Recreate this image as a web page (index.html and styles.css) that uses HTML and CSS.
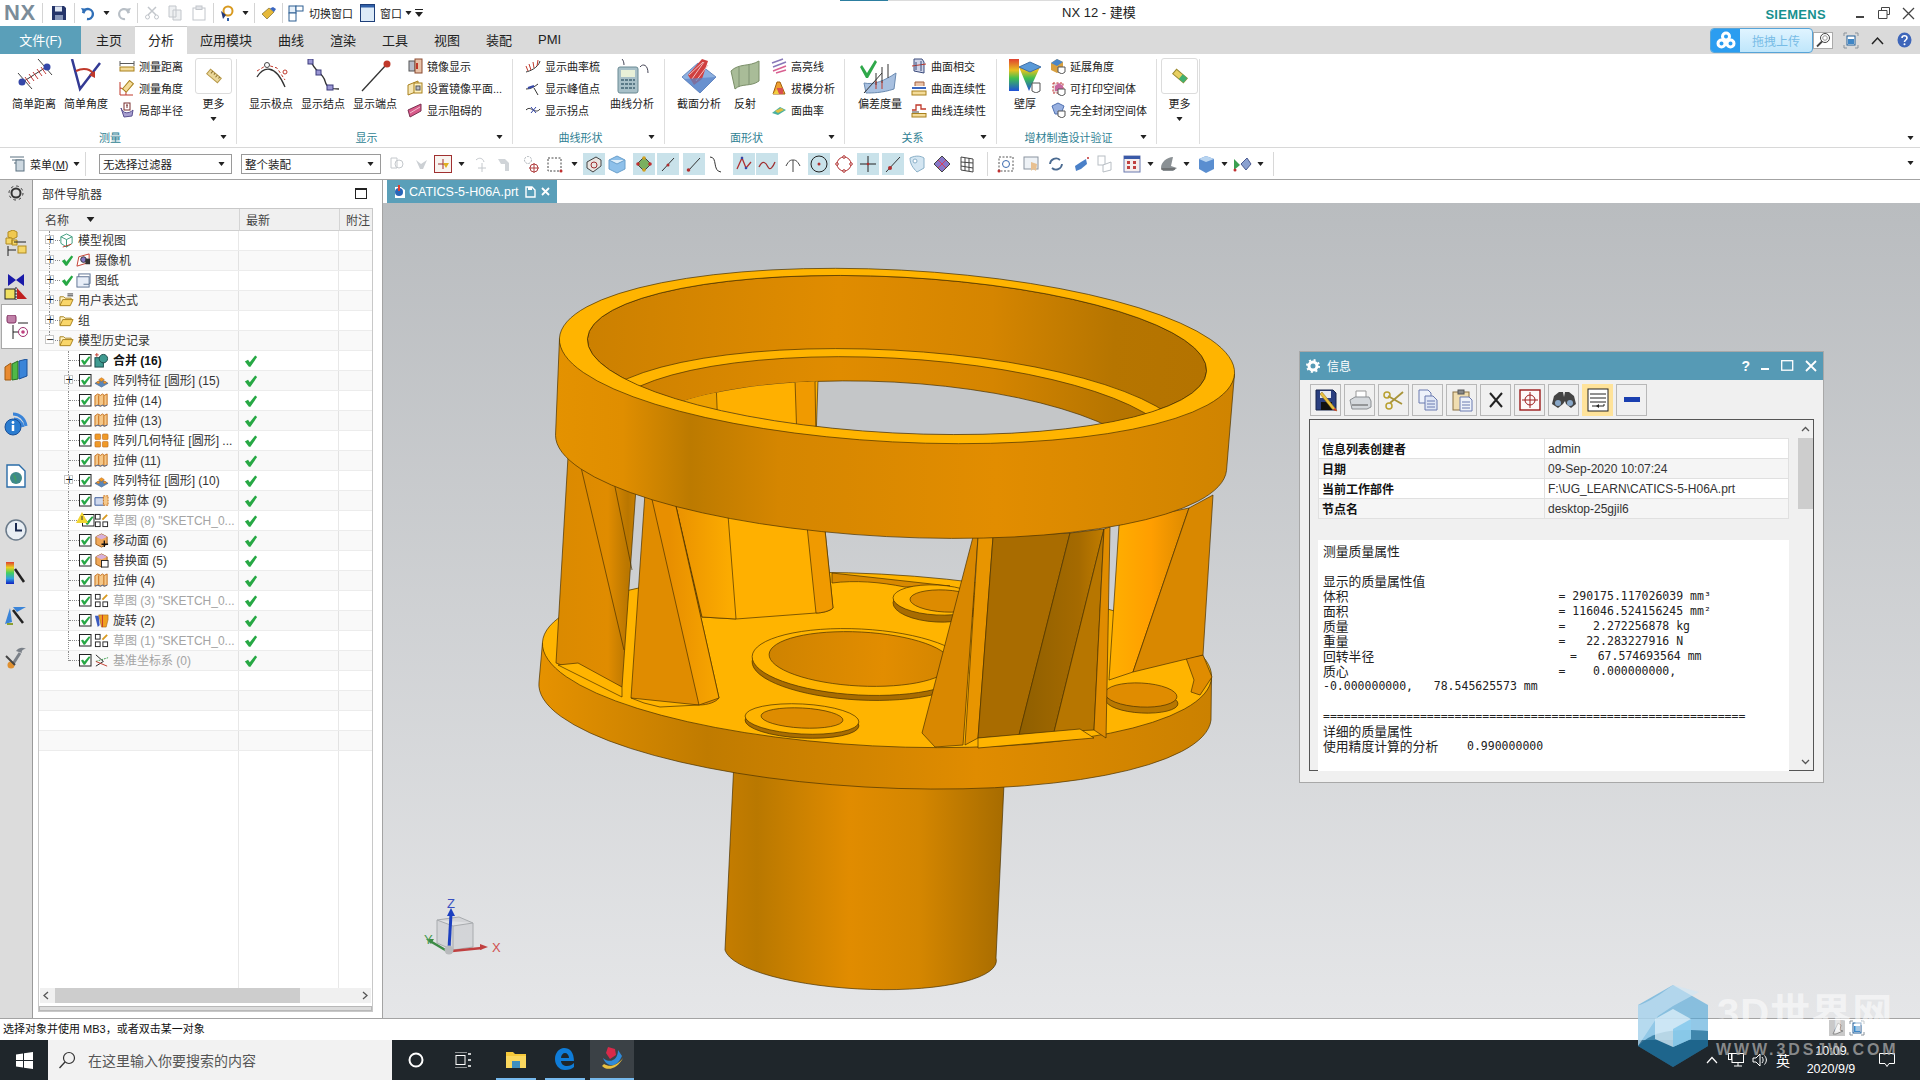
FILE: index.html
```
<!DOCTYPE html>
<html lang="zh-CN">
<head>
<meta charset="utf-8">
<title>NX 12 - 建模</title>
<link rel="stylesheet" href="styles.css">
</head>
<body>
<svg class="defs" aria-hidden="true">
  <symbol id="ok" viewBox="0 0 16 16"><path d="M1 8.5 4.6 6.6 6.6 9.4 12.8 1.8 15 3.4 7.4 14.6H5.6z" fill="#27a844"/></symbol>
  <symbol id="cb" viewBox="0 0 13 13"><rect x=".5" y=".5" width="11.5" height="11.5" fill="#fff" stroke="#222"/><path d="M2 6.6 4 5.4 5.4 7.4 10 2.2 11.4 3.2 6 10.8H4.6z" fill="#27a844"/></symbol>
  <symbol id="ext" viewBox="0 0 16 16"><path d="M1 14V3l3-2 3 1.5 2-1.5 2 1.5 3-1.5v12l-3 1-2-1-2 1-3-1-3 1z" fill="#f5c88a" stroke="#c46d17"/><path d="M5 2.5V14M10.5 2.5V14" stroke="#c46d17"/><path d="M1 14l3-1 3 1 2-1 2 1 3-1" stroke="#4a6fa5" fill="none"/></symbol>
  <symbol id="pat" viewBox="0 0 16 16"><path d="M1 11 8 7l7 4-7 4z" fill="#5a86b8" stroke="#345a88" stroke-width=".6"/><path d="M5 7l3-2 3 2-3 2zM2.500 10l2-1.400 2 1.400-2 1.400zM9.500 10l2-1.400 2 1.400-2 1.400z" fill="#f09a28" stroke="#b8641a" stroke-width=".5"/></symbol>
  <symbol id="skt" viewBox="0 0 16 16"><rect x="1.500" y="1.500" width="5" height="5" fill="#fff" stroke="#222"/><rect x="1.500" y="9.500" width="5" height="5" fill="#fff" stroke="#222"/><rect x="9.500" y="9.500" width="5" height="5" fill="#fff" stroke="#222"/><path d="M9 7 14 2" stroke="#d89a20" stroke-width="2"/></symbol>
  <symbol id="fld" viewBox="0 0 16 16"><path d="M1 13V4h4l1.500 1.500H13V7" fill="#fff3c4" stroke="#a8801c"/><path d="M1 13.500 4 7h11l-3 6.500z" fill="#f9d66a" stroke="#a8801c"/></symbol>
  <symbol id="more" viewBox="0 0 20 20"><g transform="rotate(40 10 10)"><rect x="3" y="7" width="14" height="6" fill="#ead79a" stroke="#b89a4a"/><path d="M6 7v3M9 7v2M12 7v3M15 7v2" stroke="#8a7030"/></g></symbol>
  <symbol id="tick" viewBox="0 0 8 5"><path d="M0 0h8L4 5z" fill="#222"/></symbol>
</svg>

<header class="titlebar">
  <div class="qat">
    <span class="nx">NX</span><i class="vs"></i>
    <span class="q"><svg width="16" height="16" viewBox="0 0 16 16"><path d="M1 1h12l2 2v12H1z" fill="#25356a"/><rect x="4" y="1.500" width="7" height="5" fill="#dfe6f2"/><rect x="4" y="10" width="8" height="5" fill="#8595b8"/></svg></span><i class="vs"></i>
    <span class="q"><svg width="16" height="16" viewBox="0 0 16 16"><path d="M3 8a5 5 0 1 1 4 6" fill="none" stroke="#2f6fb8" stroke-width="2.400"/><path d="M1 3l6 1-3 5z" fill="#2f6fb8"/></svg></span>
    <span class="q"><svg class="tk" viewBox="0 0 8 5"><use href="#tick"/></svg></span>
    <span class="q"><svg width="16" height="16" viewBox="0 0 16 16"><path d="M13 8a5 5 0 1 0-4 6" fill="none" stroke="#b8bfc6" stroke-width="2.200"/><path d="M15 3 9 4l3 5z" fill="#b8bfc6"/></svg></span><i class="vs"></i>
    <span class="q"><svg width="16" height="16" viewBox="0 0 16 16"><path d="M12 2 4 10M4 2l8 8" stroke="#c2c6cb" stroke-width="1.500"/><circle cx="3.500" cy="12" r="2" fill="none" stroke="#c2c6cb"/><circle cx="12.500" cy="12" r="2" fill="none" stroke="#c2c6cb"/></svg></span>
    <span class="q"><svg width="16" height="16" viewBox="0 0 16 16"><path d="M2 1h7v11H2zM6 5h8v10H6z" fill="#eef0f2" stroke="#c2c6cb"/></svg></span>
    <span class="q"><svg width="16" height="16" viewBox="0 0 16 16"><rect x="2" y="3" width="12" height="12" fill="none" stroke="#c2c6cb"/><rect x="5" y="1" width="6" height="3.500" fill="#e2e4e8" stroke="#c2c6cb"/></svg></span><i class="vs"></i>
    <span class="q"><svg width="17" height="17" viewBox="0 0 17 17"><circle cx="9" cy="6" r="4.500" fill="none" stroke="#d89a20" stroke-width="2"/><path d="M8 13h2v3H8z" fill="#2f5fa8"/><path d="M2 6l5 4-3 4z" fill="#233a7a"/></svg></span>
    <span class="q"><svg class="tk" viewBox="0 0 8 5"><use href="#tick"/></svg></span><span></span><i class="vs"></i>
    <span class="q"><svg width="17" height="15" viewBox="0 0 17 15"><path d="M2 8l7-6 5 4-7 7z" fill="#e6b93a" stroke="#6a5a20" stroke-width=".6"/><path d="M10 2.500 14 6l2-3-3-2z" fill="#3a66c0"/></svg></span><i class="vs"></i>
    <span class="q"><svg width="16" height="17" viewBox="0 0 16 17"><rect x="1" y="1" width="7" height="7" fill="#e6f0fa" stroke="#2c5e92"/><rect x="8" y="1" width="7" height="5" fill="#fff" stroke="#2c5e92"/><rect x="1" y="8" width="7" height="8" fill="#fff" stroke="#2c5e92"/></svg></span>
    <span class="qt">切换窗口</span>
    <span class="q"><svg width="15" height="18" viewBox="0 0 15 18"><rect x=".5" y=".5" width="14" height="17" fill="#dceaf7" stroke="#1e3f7a"/><rect x="1" y="1" width="13" height="2.500" fill="#2f5fa8"/></svg></span>
    <span class="qt qt-w">窗口</span>
    <span class="q"><svg class="tk" viewBox="0 0 8 5"><use href="#tick"/></svg></span>
    <span class="q"><svg width="8" height="8" viewBox="0 0 8 8"><path d="M0 0h8v1H0zM0 3h8L4 8z" fill="#222"/></svg></span>
  </div>
  <div class="doc-title">NX 12 - 建模</div>
  <div class="top-right">
    <span class="siemens">SIEMENS</span>
    <span class="wc"><svg width="10" height="10" viewBox="0 0 10 10"><rect x="1" y="8" width="8" height="2" fill="#444"/></svg></span>
    <span class="wc"><svg width="12" height="12" viewBox="0 0 12 12"><path d="M3.500 3V.5h8v7H9M.5 3.500h8.500v8H.5z" fill="none" stroke="#444"/></svg></span>
    <span class="wc"><svg width="13" height="13" viewBox="0 0 13 13"><path d="M1 1l11 11M12 1 1 12" stroke="#444" stroke-width="1.300"/></svg></span>
  </div>
</header>

<nav class="tabs">
  <span class="file">文件(F)</span>
  <span class="tab tb-a">主页</span>
  <span class="tab on">分析</span>
  <span class="tab tb-b">应用模块</span>
  <span class="tab tb-c">曲线</span>
  <span class="tab tb-c">渲染</span>
  <span class="tab tb-c">工具</span>
  <span class="tab tb-c">视图</span>
  <span class="tab tb-c">装配</span>
  <span class="tab tb-c">PMI</span>
  <div class="tab-right">
    <div class="upload">
      <span class="up-ic"><svg width="20" height="18" viewBox="0 0 20 18"><g fill="none" stroke="#fff" stroke-width="3"><circle cx="10" cy="5.500" r="3.500"/><circle cx="5.500" cy="12.500" r="3.500"/><circle cx="14.500" cy="12.500" r="3.500"/></g></svg></span>
      <span class="up-tx">拖拽上传</span>
    </div>
    <span class="find"><svg width="16" height="16" viewBox="0 0 16 16"><circle cx="10" cy="6" r="4.500" fill="#fff" stroke="#444"/><circle cx="10" cy="6" r="2.300" fill="none" stroke="#999"/><path d="M7 9.500 2 14.500" stroke="#444" stroke-width="1.800"/></svg></span>
    <span class="tr-i m1"><svg width="16" height="17" viewBox="0 0 16 17"><path d="M1 4V1h3M12 1h3v3M15 13v3h-3M4 16H1v-3" fill="none" stroke="#8a939b"/><rect x="4" y="4" width="8" height="9" fill="#fff" stroke="#1f5c96"/><rect x="5" y="7" width="6" height="5" fill="#3f86c6"/></svg></span>
    <span class="tr-i m2"><svg width="13" height="9" viewBox="0 0 13 9"><path d="M1 8 6.500 2 12 8" fill="none" stroke="#222" stroke-width="1.500"/></svg></span>
    <span class="tr-i m3"><svg width="15" height="16" viewBox="0 0 15 16"><ellipse cx="7.500" cy="8" rx="7" ry="7.500" fill="#3e66ba"/><path d="M5 6c0-3 5-3 5 0 0 2-2.500 2-2.500 4" fill="none" stroke="#fff" stroke-width="1.600"/><circle cx="7.500" cy="12.300" r="1" fill="#fff"/></svg></span>
  </div>
</nav>

<section class="ribbon">
  <div class="group g1">
    <div class="gitems">
      <div class="big"><span class="big-ic"><svg width="40" height="34" viewBox="0 0 40 34"><path d="M4 14l14 16M24 0l14 16" stroke="#444"/><path d="M7 24 34 7" stroke="#333"/><path d="M11 18l5 7M15 15l5 7M19 13l5 7M23 10l5 7M27 8l5 7" stroke="#c03a3a"/><circle cx="8" cy="23" r="3.500" fill="#3547a8"/><circle cx="33" cy="8" r="3.500" fill="#3547a8"/></svg></span><span>简单距离</span></div>
      <div class="big"><span class="big-ic"><svg width="36" height="34" viewBox="0 0 36 34"><path d="M4 0 12 30 32 4" fill="none" stroke="#333a94" stroke-width="2.500"/><path d="M8 12C16 8 23 10 26 16" fill="none" stroke="#c0392b" stroke-width="2"/><path d="M27 19l-6-3 6-4z" fill="#c0392b"/></svg></span><span>简单角度</span></div>
      <div class="smalls s1">
        <div class="sm"><svg viewBox="0 0 16 16"><path d="M1 3v5M15 3v5M1 5.500h14" stroke="#5a5a5a"/><rect x="1" y="9" width="14" height="4" fill="#f4dc9a" stroke="#a8801c"/></svg><span>测量距离</span></div>
        <div class="sm"><svg viewBox="0 0 16 16"><path d="M1 2V15H14" fill="none" stroke="#c0392b"/><path d="M1 8a6 6 0 0 1 6 7" fill="none" stroke="#c0392b"/><g transform="rotate(-50 9 7)"><rect x="4" y="4" width="11" height="5" fill="#f4dc9a" stroke="#a8801c"/></g></svg><span>测量角度</span></div>
        <div class="sm"><svg viewBox="0 0 16 16"><path d="M2 6c2 6 8 6 12 2l-1 6-8 1z" fill="#a8a0d0" stroke="#5a5090"/><rect x="5" y="1" width="6" height="7" fill="#fff" stroke="#7a3030"/><path d="M7 3h2M8 3v3" stroke="#7a3030"/></svg><span>局部半径</span></div>
      </div>
      <div class="more-col"><span class="more-box"><svg width="20" height="20"><use href="#more"/></svg></span><span>更多</span><svg class="tk" viewBox="0 0 8 5"><use href="#tick"/></svg></div>
    </div>
    <div class="glabel"><span>测量</span><svg class="tk" viewBox="0 0 8 5"><use href="#tick"/></svg></div>
  </div>

  <div class="group g2">
    <div class="gitems">
      <div class="big"><span class="big-ic"><svg width="40" height="34" viewBox="0 0 40 34"><path d="M6 18C12 8 24 4 34 28" fill="none" stroke="#333" stroke-width="1.300"/><path d="M6 12l10-6 10 3 8 12" fill="none" stroke="#c0392b" stroke-dasharray="3 2"/><circle cx="16" cy="6" r="2.500" fill="#fff" stroke="#444"/><circle cx="34" cy="13" r="2" fill="#fff" stroke="#c0392b"/></svg></span><span>显示极点</span></div>
      <div class="big"><span class="big-ic"><svg width="40" height="34" viewBox="0 0 40 34"><path d="M8 2c3 10 12 12 14 20s8 8 14 8" fill="none" stroke="#333" stroke-width="1.300"/><g fill="#9a96d4" stroke="#3a3a7a"><rect x="5" y="0" width="5" height="5"/><rect x="13" y="11" width="5" height="5"/><rect x="24" y="26" width="6" height="5"/></g></svg></span><span>显示结点</span></div>
      <div class="big"><span class="big-ic"><svg width="40" height="34" viewBox="0 0 40 34"><path d="M7 32 31 6" stroke="#333" stroke-width="1.300"/><circle cx="32" cy="5" r="3.500" fill="#c0392b"/></svg></span><span>显示端点</span></div>
      <div class="smalls s2">
        <div class="sm"><svg viewBox="0 0 16 16"><rect x="2" y="3" width="6" height="10" fill="#b8bcc8" stroke="#555"/><rect x="8" y="1" width="7" height="14" fill="#e8c2a8" stroke="#8a4a30"/><path d="M10 5v6" stroke="#c0392b" stroke-width="2"/></svg><span>镜像显示</span></div>
        <div class="sm"><svg viewBox="0 0 16 16"><path d="M1 5 11 1v10L1 15z" fill="#f6e7b6" stroke="#a8801c"/><rect x="7" y="3" width="8" height="10" fill="#fff2c0" stroke="#a8801c"/><rect x="9" y="6" width="4" height="4" fill="#b8bcc8" stroke="#555"/></svg><span>设置镜像平面...</span></div>
        <div class="sm"><svg viewBox="0 0 16 16"><path d="M1 8 14 2v7L3 15z" fill="#d85a8a" stroke="#7a3050"/><path d="M3 11 13 5" stroke="#f2c0d0"/></svg><span>显示阻碍的</span></div>
      </div>
    </div>
    <div class="glabel"><span>显示</span><svg class="tk" viewBox="0 0 8 5"><use href="#tick"/></svg></div>
  </div>

  <div class="group g3">
    <div class="gitems">
      <div class="smalls s3">
        <div class="sm"><svg viewBox="0 0 16 16"><path d="M1 14C5 13 13 10 15 3" fill="none" stroke="#333"/><path d="M3 13 1 8M6 12 4 6M9 10 8 4M12 8l1-6" stroke="#c0392b"/></svg><span>显示曲率梳</span></div>
        <div class="sm"><svg viewBox="0 0 16 16"><path d="M1 9C6 9 9 7 13 4" fill="none" stroke="#333"/><path d="M9 8l4 7" stroke="#333"/><path d="M3 8 9 6" stroke="#3547a8" stroke-width="2"/></svg><span>显示峰值点</span></div>
        <div class="sm"><svg viewBox="0 0 16 16"><path d="M1 8c3-3 5-1 7 0s5 2 7-1" fill="none" stroke="#333"/><path d="M6 5l5 6M11 5l-5 6" stroke="#3547a8"/></svg><span>显示拐点</span></div>
      </div>
      <div class="big"><span class="big-ic"><svg width="36" height="36" viewBox="0 0 36 36"><path d="M10 6C10 3 9 1 8 0M26 8c3-4 8-2 8 6" fill="none" stroke="#445"/><rect x="4" y="8" width="20" height="26" rx="2" fill="#a8c0c8" stroke="#6a8a94"/><rect x="7" y="11" width="14" height="7" fill="#e8f0d8"/><path d="M7 21h14M7 25h14M7 29h14" stroke="#5a7a88" stroke-dasharray="3 1" stroke-width="2"/></svg></span><span>曲线分析</span></div>
    </div>
    <div class="glabel"><span>曲线形状</span><svg class="tk" viewBox="0 0 8 5"><use href="#tick"/></svg></div>
  </div>

  <div class="group g4">
    <div class="gitems">
      <div class="big"><span class="big-ic"><svg width="38" height="36" viewBox="0 0 38 36"><path d="M2 18 18 4l18 14-16 16z" fill="#8cb0e0" stroke="#6a8ac0"/><path d="M8 16 22 0l6 2-6 18-8 6z" fill="#d04040"/><path d="M12 20 24 3M16 22 28 6M9 16l14-13" stroke="#f2c0c0"/><path d="M4 20l16 14 16-16" fill="#5a84c8" opacity=".7"/></svg></span><span>截面分析</span></div>
      <div class="big narrow"><span class="big-ic"><svg width="32" height="32" viewBox="0 0 32 32"><path d="M2 12C10 4 20 8 30 2v20c-8 6-18 2-24 8z" fill="#a9bc98" stroke="#7a8e68"/><path d="M10 8v20M20 6v20" stroke="#7e9272"/></svg></span><span>反射</span></div>
      <div class="smalls s4">
        <div class="sm"><svg viewBox="0 0 16 16"><g fill="none" stroke="#8878b8" stroke-width="1.500"><path d="M1 5 12 1"/><path d="M2 9 15 4"/></g><g fill="none" stroke="#d86090" stroke-width="1.500"><path d="M2 13 15 8"/><path d="M5 15l10-3"/></g></svg><span>高亮线</span></div>
        <div class="sm"><svg viewBox="0 0 16 16"><path d="M2 14 6 2h3l5 12z" fill="#f0a030" stroke="#a06010"/><path d="M6 8h6v6H6z" fill="#d85050"/><path d="M2 14l4-5 2 5z" fill="#f0d040"/></svg><span>拔模分析</span></div>
        <div class="sm"><svg viewBox="0 0 16 16"><path d="M1 11 9 5l6 3-8 5z" fill="#4ab0a0"/><path d="M4 9l6-3 3 2-6 3z" fill="#e0c040"/></svg><span>面曲率</span></div>
      </div>
    </div>
    <div class="glabel"><span>面形状</span><svg class="tk" viewBox="0 0 8 5"><use href="#tick"/></svg></div>
  </div>

  <div class="group g5">
    <div class="gitems">
      <div class="big"><span class="big-ic"><svg width="40" height="36" viewBox="0 0 40 36"><path d="M4 24C14 26 24 22 36 14l-2 16C22 34 12 34 6 34z" fill="#a8c0e0" stroke="#6a8ab0"/><path d="M4 34 22 14" stroke="#333"/><path d="M2 6l5 8 8-13 2 2-9 16H6L0 8z" fill="#2fa84a"/><path d="M16 14v12M22 8v16M28 5v14" stroke="#333"/><path d="M16 22v8M22 22v8" stroke="#c0392b"/></svg></span><span>偏差度量</span></div>
      <div class="smalls s5">
        <div class="sm"><svg viewBox="0 0 16 16"><path d="M3 1h8l2 3v11l-10-2z" fill="#cfd4e8" stroke="#3a4a7a"/><path d="M1 8 15 6" stroke="#c0392b"/><path d="M5 4v8M10 3v10" stroke="#3a4a7a"/></svg><span>曲面相交</span></div>
        <div class="sm"><svg viewBox="0 0 16 16"><path d="M4 6V2h9v4" fill="#e8c2a8" stroke="#a06040"/><rect x="1" y="7" width="14" height="2" fill="#3a66c0"/><rect x="1" y="11" width="14" height="4" fill="#f4dc9a" stroke="#a8801c"/></svg><span>曲面连续性</span></div>
        <div class="sm"><svg viewBox="0 0 16 16"><path d="M1 8h4V3h5v4h5" fill="none" stroke="#c0392b" stroke-width="1.300"/><path d="M1 10h7" stroke="#444"/><rect x="1" y="11.500" width="14" height="3.500" fill="#f4dc9a" stroke="#a8801c"/></svg><span>曲线连续性</span></div>
      </div>
    </div>
    <div class="glabel"><span>关系</span><svg class="tk" viewBox="0 0 8 5"><use href="#tick"/></svg></div>
  </div>

  <div class="group g6">
    <div class="gitems">
      <div class="big narrow"><span class="big-ic"><svg width="34" height="34" viewBox="0 0 34 34"><defs><linearGradient id="rb" x1="0" y1="0" x2="0" y2="1"><stop offset="0" stop-color="#e04030"/><stop offset=".35" stop-color="#e8c020"/><stop offset=".6" stop-color="#40c050"/><stop offset="1" stop-color="#2050d8"/></linearGradient></defs><path d="M1 0h10v32H1zM11 8 32 8 21 32z" fill="url(#rb)"/><path d="M11 8l11-5 11 5-11 5z" fill="#5a9ad8" stroke="#4070a8"/><path d="M24 24h8v8l-4 2-4-2z" fill="#fff" stroke="#555"/></svg></span><span>壁厚</span></div>
      <div class="smalls s6">
        <div class="sm"><svg viewBox="0 0 16 16"><path d="M1 5 7 1l6 3v8l-6 3-6-3z" fill="#d8a040"/><path d="M1 5l6 3 6-4-6-3z" fill="#4a86c8"/><path d="M8 9h7v5l-3 2-4-2z" fill="#fff" stroke="#555"/></svg><span>延展角度</span></div>
        <div class="sm"><svg viewBox="0 0 16 16"><path d="M3 3h10v10H3z" fill="#e8d8d8" stroke="#c03030" stroke-dasharray="2 1.500"/><path d="M5 6l4-3 4 3v5H5z" fill="#c868a0"/><path d="M8 9h7v5l-3 2-4-2z" fill="#fff" stroke="#555"/></svg><span>可打印空间体</span></div>
        <div class="sm"><svg viewBox="0 0 16 16"><path d="M2 4 8 1l6 3-3 8H5z" fill="#98b0e0" stroke="#5070b0"/><path d="M8 9h7v5l-3 2-4-2z" fill="#fff" stroke="#555"/></svg><span>完全封闭空间体</span></div>
      </div>
    </div>
    <div class="glabel"><span>增材制造设计验证</span><svg class="tk" viewBox="0 0 8 5"><use href="#tick"/></svg></div>
  </div>

  <div class="group g7">
    <div class="gitems">
      <div class="more-col"><span class="more-box"><svg width="20" height="20" viewBox="0 0 20 20"><g transform="rotate(40 10 10)"><rect x="3" y="7" width="14" height="6" fill="#e8d060" stroke="#9a8a30"/><rect x="11" y="7" width="6" height="6" fill="#40b070"/></g></svg></span><span>更多</span><svg class="tk" viewBox="0 0 8 5"><use href="#tick"/></svg></div>
    </div>
  </div>
  <svg class="tk rib-end" viewBox="0 0 8 5"><use href="#tick"/></svg>
</section>

<section class="selbar">
  <span class="menu-ic"><svg width="18" height="17" viewBox="0 0 18 17"><path d="M1 2h14M3 5h10M5 8h8" stroke="#5a7080"/><rect x="7" y="5" width="8" height="11" fill="#cdd8e0" stroke="#5a7080"/></svg></span>
  <span class="menu-tx">菜单(<u>M</u>)</span>
  <svg class="tk" viewBox="0 0 8 5"><use href="#tick"/></svg>
  <i class="sel-sep"></i>
  <div class="combo c-a">无选择过滤器<svg class="tk" viewBox="0 0 8 5"><use href="#tick"/></svg></div>
  <div class="combo c-b">整个装配<svg class="tk" viewBox="0 0 8 5"><use href="#tick"/></svg></div>
  <div class="tools">
    <span class="c"><svg viewBox="0 0 20 20"><path d="M5 4h6v10H5z" fill="none" stroke="#c4c8cc"/><circle cx="13" cy="10" r="4" fill="none" stroke="#c4c8cc"/></svg></span>
    <span class="c"><svg viewBox="0 0 20 20"><path d="M4 6l5 4 6-4-4 9H8z" fill="#ccd0d4"/></svg></span>
    <span class="c boxed"><svg viewBox="0 0 20 20"><rect x="1.500" y="1.500" width="17" height="17" fill="#f8f4f0" stroke="#a03030"/><path d="M10 5v10M5 10h10" stroke="#a03030"/><path d="M10 9l6 0-3 5z" fill="#e0b020"/></svg></span>
    <span class="c"><svg class="tk" viewBox="0 0 8 5"><use href="#tick"/></svg></span>
    <span class="c"><svg viewBox="0 0 20 20"><path d="M4 6c3-3 7-2 8 2M10 9v9M6 14h8" fill="none" stroke="#c4c8cc"/></svg></span>
    <span class="c"><svg viewBox="0 0 20 20"><path d="M3 5h7l4 4v8h-4V10H6z" fill="#d0d4d8"/></svg></span>
    <span class="c"><svg viewBox="0 0 20 20"><circle cx="7" cy="6" r="3.500" fill="none" stroke="#aab0b6" stroke-dasharray="2 1"/><circle cx="13" cy="14" r="4" fill="none" stroke="#b04040"/><path d="M13 9v10M8 14h10" stroke="#b04040"/></svg></span>
    <span class="c"><svg viewBox="0 0 20 20"><rect x="3" y="4" width="13" height="13" fill="none" stroke="#444" stroke-dasharray="2 1.500"/><circle cx="16" cy="17" r="1.500" fill="#c03030"/></svg></span>
    <span class="c"><svg class="tk" viewBox="0 0 8 5"><use href="#tick"/></svg></span>
    <span class="c on"><svg viewBox="0 0 20 20"><path d="M3 8l9-5 5 3v6l-8 6-6-4z" fill="#e8e4e0" stroke="#444"/><circle cx="10" cy="11" r="3" fill="none" stroke="#a03030"/></svg></span>
    <span class="c"><svg viewBox="0 0 20 20"><path d="M10 2l8 4v9l-8 4-8-4V6z" fill="#8ec0ea" stroke="#6aa0cc"/><path d="M2 6l8 4 8-4" fill="#dfeefa" stroke="#6aa0cc"/></svg></span>
    <span class="c on"><svg viewBox="0 0 20 20"><path d="M10 3l7 7-7 7-7-7z" fill="#7ab060" stroke="#444"/><circle cx="10" cy="4" r="1.800" fill="#d0a020"/><circle cx="16" cy="10" r="1.800" fill="#c03030"/><circle cx="10" cy="16" r="1.800" fill="#d0a020"/><circle cx="4" cy="10" r="1.800" fill="#c03030"/></svg></span>
    <span class="c on"><svg viewBox="0 0 20 20"><path d="M4 17 16 4" stroke="#333"/><circle cx="10" cy="11" r="1.500" fill="#b03030"/></svg></span>
    <span class="c on"><svg viewBox="0 0 20 20"><path d="M4 17 16 4" stroke="#333"/><circle cx="4.500" cy="16" r="1.800" fill="#b03030"/></svg></span>
    <span class="c"><svg viewBox="0 0 20 20"><path d="M4 3c8 0 2 14 11 15" fill="none" stroke="#333"/></svg></span>
    <span class="c on"><svg viewBox="0 0 20 20"><path d="M3 15 8 4l4 10 5-6" fill="none" stroke="#b03030" stroke-width="1.300"/><circle cx="8" cy="4" r="1.300" fill="#3547a8"/><circle cx="12" cy="14" r="1.300" fill="#3547a8"/></svg></span>
    <span class="c on"><svg viewBox="0 0 20 20"><path d="M2 13c4-8 7-4 9 0s5 0 7-5" fill="none" stroke="#a03030" stroke-width="1.300"/></svg></span>
    <span class="c"><svg viewBox="0 0 20 20"><path d="M10 18V6M3 12c3-6 5-6 7-6s4 0 7 6" fill="none" stroke="#444"/></svg></span>
    <span class="c on"><svg viewBox="0 0 20 20"><circle cx="10" cy="10" r="8" fill="none" stroke="#222"/><circle cx="10" cy="10" r="1.500" fill="#b03030"/></svg></span>
    <span class="c"><svg viewBox="0 0 20 20"><circle cx="10" cy="10" r="7" fill="none" stroke="#b03030"/><g fill="#fff" stroke="#b03030"><circle cx="10" cy="3" r="1.300"/><circle cx="17" cy="10" r="1.300"/><circle cx="10" cy="17" r="1.300"/><circle cx="3" cy="10" r="1.300"/></g></svg></span>
    <span class="c on"><svg viewBox="0 0 20 20"><path d="M10 2v16M2 10h16" stroke="#222"/><circle cx="10" cy="10" r="1.300" fill="#b03030"/></svg></span>
    <span class="c on"><svg viewBox="0 0 20 20"><path d="M3 18 17 3" stroke="#333"/><circle cx="7" cy="14" r="2" fill="#b03030"/></svg></span>
    <span class="c"><svg viewBox="0 0 20 20"><path d="M3 4c6-3 11-2 14 0v10l-7 4c-4-4-7-8-7-14z" fill="#d4e6f2" stroke="#8ab0c8"/><circle cx="8" cy="7" r="2" fill="#fff" stroke="#8ab0c8"/></svg></span>
    <span class="c"><svg viewBox="0 0 20 20"><path d="M10 2l8 8-8 8-8-8z" fill="#8878c8" stroke="#444"/><path d="M6 6l8 8M14 6l-8 8" stroke="#d04060"/></svg></span>
    <span class="c"><svg viewBox="0 0 20 20"><path d="M4 3l12 2v13L4 16zM8 4v13M12 4v13M4 8l12 1M4 12l12 2" fill="#fff" stroke="#444"/></svg></span>
    <span class="c"><i class="tool-sep"></i></span>
    <span class="c"><svg viewBox="0 0 20 20"><rect x="3" y="3" width="14" height="14" fill="none" stroke="#555" stroke-dasharray="2 1.500"/><circle cx="10" cy="10" r="3.500" fill="none" stroke="#3a6ab0"/><circle cx="3" cy="17" r="1.500" fill="#c03030"/></svg></span>
    <span class="c"><svg viewBox="0 0 20 20"><rect x="3" y="3" width="14" height="12" fill="#eef2f6" stroke="#8a94a0"/><path d="M10 8v9l2-2 3 2 1-7z" fill="#e8c090"/></svg></span>
    <span class="c"><svg viewBox="0 0 20 20"><path d="M4 10a6 6 0 0 1 10-4M16 10a6 6 0 0 1-10 4" fill="none" stroke="#4a6a90" stroke-width="1.800"/></svg></span>
    <span class="c"><svg viewBox="0 0 20 20"><path d="M3 12l6-4 5-3 1 5-6 5-5 2z" fill="#4a80c8"/><circle cx="16" cy="4" r="1" fill="#c03030"/></svg></span>
    <span class="c"><svg viewBox="0 0 20 20"><rect x="3" y="2" width="7" height="9" fill="#fff" stroke="#b8bec4"/><path d="M8 11l8-3v8l-8 2z" fill="#fff" stroke="#b8bec4"/></svg></span>
    <span class="c"><svg viewBox="0 0 20 20"><rect x="2" y="2" width="16" height="16" fill="#f4eeee" stroke="#6a7ab0"/><rect x="2" y="2" width="16" height="3" fill="#3a5aa8"/><g fill="#c04040"><rect x="5" y="7" width="3" height="3"/><rect x="11" y="7" width="3" height="3"/><rect x="5" y="12" width="3" height="3"/><rect x="11" y="12" width="3" height="3"/></g></svg></span>
    <span class="c"><svg class="tk" viewBox="0 0 8 5"><use href="#tick"/></svg></span>
    <span class="c"><svg viewBox="0 0 20 20"><path d="M2 14c0-6 6-11 12-11l-2 9 6 2-4 3H4z" fill="#8a9094"/><path d="M2 15h14" stroke="#555"/></svg></span>
    <span class="c"><svg class="tk" viewBox="0 0 8 5"><use href="#tick"/></svg></span>
    <span class="c"><svg viewBox="0 0 20 20"><path d="M10 2l8 3v10l-8 4-7-4V5z" fill="#5a8ed0"/><path d="M3 5l7 3 8-3-8-3z" fill="#b8d4f0"/></svg></span>
    <span class="c"><svg class="tk" viewBox="0 0 8 5"><use href="#tick"/></svg></span>
    <span class="c"><svg viewBox="0 0 20 20"><path d="M9 10l6-6 4 6-5 6z" fill="#8aa0d0" stroke="#4a5a90"/><path d="M2 5v11l6-5z" fill="#3aa050"/><circle cx="3" cy="16" r="1.500" fill="#c03030"/></svg></span>
    <span class="c"><svg class="tk" viewBox="0 0 8 5"><use href="#tick"/></svg></span>
    <span class="c"><i class="tool-sep"></i></span>
  </div>
  <svg class="tk sel-end" viewBox="0 0 8 5"><use href="#tick"/></svg>
</section>

<main class="main">
  <aside class="rail">
    <div class="r-cell"><svg width="16" height="16" viewBox="0 0 16 16"><circle cx="8" cy="8" r="4.500" fill="none" stroke="#333" stroke-width="2"/><circle cx="8" cy="8" r="7" fill="none" stroke="#333" stroke-dasharray="2.500 3"/></svg></div>
    <div class="r-cell"><svg width="24" height="26" viewBox="0 0 24 26"><path d="M4 2l5-2 4 2v5l-4 2-5-2z" fill="#f0c850" stroke="#b08a20"/><path d="M2 8h6v6H2zM8 10h5v5H8z" fill="#f4d668" stroke="#b08a20"/><path d="M4 16v10M4 20h8M10 12h12" stroke="#222"/><rect x="14" y="16" width="8" height="7" fill="#f4d668" stroke="#b08a20"/></svg></div>
    <div class="r-cell"><svg width="24" height="26" viewBox="0 0 24 26"><path d="M4 0l8 6 8-6v12l-8-6-8 6z" fill="#1a1aa8"/><rect x="1" y="15" width="10" height="10" fill="#f0e060" stroke="#222"/><path d="M13 25V14l10 11z" fill="#c02020"/><path d="M12 13v13" stroke="#222" stroke-dasharray="2 1"/></svg></div>
    <div class="r-cell r-on"><svg width="24" height="24" viewBox="0 0 24 24"><rect x="2" y="0" width="9" height="8" rx="2" fill="#c080a8" stroke="#803060"/><path d="M8 10v14M8 17h5M13 8h10" stroke="#222"/><circle cx="18" cy="17" r="4.500" fill="#fff" stroke="#a03070"/><circle cx="18" cy="17" r="1.800" fill="#c04080"/></svg></div>
    <div class="r-cell"><svg width="24" height="22" viewBox="0 0 24 22"><path d="M1 8l6-4v17H1z" fill="#e88a30" stroke="#a05a10"/><path d="M8 5l6-3v18l-6 1z" fill="#50b848" stroke="#287020"/><path d="M15 2l8-2v17l-8 3z" fill="#3a84d8" stroke="#1a5098"/></svg></div>
    <div class="r-cell"><svg width="26" height="26" viewBox="0 0 26 26"><path d="M10 4c7 0 12 5 13 12M11 9c4 0 8 3 9 8" fill="none" stroke="#3a84d8" stroke-width="3"/><circle cx="10" cy="17" r="8" fill="#2a7cd0" stroke="#1a5098"/><path d="M10 15v6" stroke="#fff" stroke-width="2.500"/><circle cx="10" cy="12.500" r="1.400" fill="#fff"/></svg></div>
    <div class="r-cell"><svg width="20" height="24" viewBox="0 0 20 24"><path d="M1 1h12l6 6v16H1z" fill="#fff" stroke="#2a6ca8" stroke-width="1.400"/><circle cx="10" cy="14" r="6" fill="#3f8a8a"/><path d="M7 10c3 2 4 4 3 9" fill="#3fa060"/></svg></div>
    <div class="r-cell"><svg width="22" height="22" viewBox="0 0 22 22"><circle cx="11" cy="11" r="10" fill="#e8eef4" stroke="#6a7a8a" stroke-width="1.500"/><path d="M11 4v7.500H17" fill="none" stroke="#1a2a50" stroke-width="2"/></svg></div>
    <div class="r-cell"><svg width="22" height="24" viewBox="0 0 22 24"><defs><linearGradient id="rb2" x1="0" y1="0" x2="0" y2="1"><stop offset="0" stop-color="#e04030"/><stop offset=".25" stop-color="#e8d020"/><stop offset=".5" stop-color="#40d060"/><stop offset=".75" stop-color="#30a0e0"/><stop offset="1" stop-color="#1020c0"/></linearGradient></defs><rect x="1" y="1" width="8" height="22" fill="url(#rb2)"/><path d="M10 8l9 13" stroke="#222" stroke-width="2.500"/></svg></div>
    <div class="r-cell"><svg width="24" height="22" viewBox="0 0 24 22"><path d="M1 20 6 4l2 14z" fill="#3a84d8"/><path d="M3 20h6" stroke="#8aa030" stroke-width="2"/><path d="M9 3h13l-9 5z" fill="#3a84d8"/><path d="M9 6l10 13" stroke="#222" stroke-width="2.500"/></svg></div>
    <div class="r-cell"><svg width="22" height="24" viewBox="0 0 22 24"><path d="M6 22l9-14" stroke="#7a8088" stroke-width="3"/><path d="M11 6c3-4 7-4 10-2-3 0-5 2-4 4z" fill="#7a8088"/><circle cx="6" cy="20" r="3.500" fill="#e09030"/><path d="M1 11l9 9" stroke="#444" stroke-width="2"/></svg></div>
  </aside>

  <section class="nav">
    <div class="nav-head"><span>部件导航器</span><i class="nav-max"></i></div>
    <div class="tree">
      <div class="thead"><span class="th1">名称<svg class="tk sort" viewBox="0 0 8 5"><use href="#tick"/></svg></span><span>最新</span><span>附注</span></div>
      <div class="tbody">
        <div class="row"><div class="nm"><span class="twig"><b class="pm">+</b></span><svg class="ri" viewBox="0 0 16 16"><path d="M8 1l6 3v7l-6 4-6-4V4z" fill="none" stroke="#3a9a7a"/><path d="M2 4l6 3 6-3M8 7v8" fill="none" stroke="#3a9a7a"/><path d="M4 15l9-3" stroke="#c0392b"/></svg><span class="tx">模型视图</span></div></div>
        <div class="row"><div class="nm"><span class="twig"><b class="pm">+</b></span><svg class="rc" viewBox="0 0 16 16"><use href="#ok"/></svg><svg class="ri" viewBox="0 0 16 16"><path d="M1 14 3 4l11-3v9z" fill="#fff" stroke="#c0392b"/><circle cx="8" cy="7" r="3" fill="#8878c8" stroke="#333"/><rect x="10" y="6" width="5" height="6" fill="#333"/></svg><span class="tx t-c">摄像机</span></div></div>
        <div class="row"><div class="nm"><span class="twig"><b class="pm">+</b></span><svg class="rc" viewBox="0 0 16 16"><use href="#ok"/></svg><svg class="ri" viewBox="0 0 16 16"><rect x="3" y="1" width="12" height="10" fill="#fff" stroke="#5a7090"/><rect x="1" y="4" width="13" height="11" fill="#e8eef8" stroke="#5a7090"/><path d="M8 12h6" stroke="#5a7090"/></svg><span class="tx t-c">图纸</span></div></div>
        <div class="row"><div class="nm"><span class="twig"><b class="pm">+</b></span><svg class="ri" viewBox="0 0 16 16"><use href="#fld"/><path d="M9 1h6M9 3h6" stroke="#333"/></svg><span class="tx">用户表达式</span></div></div>
        <div class="row"><div class="nm"><span class="twig"><b class="pm">+</b></span><svg class="ri" viewBox="0 0 16 16"><use href="#fld"/></svg><span class="tx">组</span></div></div>
        <div class="row"><div class="nm"><span class="twig last"><b class="pm">−</b></span><svg class="ri" viewBox="0 0 16 16"><use href="#fld"/></svg><span class="tx">模型历史记录</span></div></div>

        <div class="row"><div class="nm ch"><span class="twig"></span><svg class="cb"><use href="#cb"/></svg><svg class="ri" viewBox="0 0 16 16"><rect x="1" y="5" width="9" height="10" fill="#3f9a90" stroke="#1a4a48"/><circle cx="10" cy="6" r="4.500" fill="#3f9a90" stroke="#1a4a48"/><path d="M1 2h4M3 0v4" stroke="#c0392b"/></svg><b class="tx">合并 (16)</b></div><svg class="okc"><use href="#ok"/></svg></div>
        <div class="row"><div class="nm ch"><span class="twig"><b class="pm">+</b></span><svg class="cb"><use href="#cb"/></svg><svg class="ri" viewBox="0 0 16 16"><use href="#pat"/></svg><span class="tx">阵列特征 [圆形] (15)</span></div><svg class="okc"><use href="#ok"/></svg></div>
        <div class="row"><div class="nm ch"><span class="twig"></span><svg class="cb"><use href="#cb"/></svg><svg class="ri" viewBox="0 0 16 16"><use href="#ext"/></svg><span class="tx">拉伸 (14)</span></div><svg class="okc"><use href="#ok"/></svg></div>
        <div class="row"><div class="nm ch"><span class="twig"></span><svg class="cb"><use href="#cb"/></svg><svg class="ri" viewBox="0 0 16 16"><use href="#ext"/></svg><span class="tx">拉伸 (13)</span></div><svg class="okc"><use href="#ok"/></svg></div>
        <div class="row"><div class="nm ch"><span class="twig"></span><svg class="cb"><use href="#cb"/></svg><svg class="ri" viewBox="0 0 16 16"><g fill="#f09a28" stroke="#b8641a" stroke-width=".6"><rect x="1" y="1" width="6" height="6" rx="1"/><rect x="9" y="1" width="6" height="6" rx="1"/><rect x="1" y="9" width="6" height="6" rx="1"/><rect x="9" y="9" width="6" height="6" rx="1"/></g></svg><span class="tx">阵列几何特征 [圆形] ...</span></div><svg class="okc"><use href="#ok"/></svg></div>
        <div class="row"><div class="nm ch"><span class="twig"></span><svg class="cb"><use href="#cb"/></svg><svg class="ri" viewBox="0 0 16 16"><use href="#ext"/></svg><span class="tx">拉伸 (11)</span></div><svg class="okc"><use href="#ok"/></svg></div>
        <div class="row"><div class="nm ch"><span class="twig"><b class="pm">+</b></span><svg class="cb"><use href="#cb"/></svg><svg class="ri" viewBox="0 0 16 16"><use href="#pat"/></svg><span class="tx">阵列特征 [圆形] (10)</span></div><svg class="okc"><use href="#ok"/></svg></div>
        <div class="row"><div class="nm ch"><span class="twig"></span><svg class="cb"><use href="#cb"/></svg><svg class="ri" viewBox="0 0 16 16"><path d="M1 5h10v8H1z" fill="#cfd8ec" stroke="#3a5a9a"/><path d="M10 3h5v10h-5z" fill="#f5c88a" stroke="#c46d17" stroke-dasharray="2 1"/></svg><span class="tx">修剪体 (9)</span></div><svg class="okc"><use href="#ok"/></svg></div>
        <div class="row"><div class="nm ch"><span class="twig"></span><svg class="cb warn"><use href="#cb"/></svg><svg class="warn-ic" viewBox="0 0 12 11"><path d="M6 0l6 11H0z" fill="#f2d530"/><path d="M6 4v4" stroke="#333"/></svg><svg class="ri" viewBox="0 0 16 16"><use href="#skt"/></svg><span class="tx g">草图 (8) "SKETCH_0...</span></div><svg class="okc"><use href="#ok"/></svg></div>
        <div class="row"><div class="nm ch"><span class="twig"></span><svg class="cb"><use href="#cb"/></svg><svg class="ri" viewBox="0 0 16 16"><path d="M2 4l6-3 6 3v8l-6 3-6-3z" fill="#f0a858" stroke="#a0601c"/><path d="M2 4l6 3 6-3-6-3z" fill="#d8b0d8"/><path d="M11 8v7M8 12h7" stroke="#111" stroke-width="1.400"/></svg><span class="tx">移动面 (6)</span></div><svg class="okc"><use href="#ok"/></svg></div>
        <div class="row"><div class="nm ch"><span class="twig"></span><svg class="cb"><use href="#cb"/></svg><svg class="ri" viewBox="0 0 16 16"><path d="M2 4l6-3 6 3v8l-6 3-6-3z" fill="#f0a858" stroke="#a0601c"/><path d="M2 4l6 3 6-3-6-3z" fill="#d8b0d8"/><rect x="8" y="8" width="7" height="7" fill="#fff" stroke="#222"/></svg><span class="tx">替换面 (5)</span></div><svg class="okc"><use href="#ok"/></svg></div>
        <div class="row"><div class="nm ch"><span class="twig"></span><svg class="cb"><use href="#cb"/></svg><svg class="ri" viewBox="0 0 16 16"><use href="#ext"/></svg><span class="tx">拉伸 (4)</span></div><svg class="okc"><use href="#ok"/></svg></div>
        <div class="row"><div class="nm ch"><span class="twig"></span><svg class="cb"><use href="#cb"/></svg><svg class="ri" viewBox="0 0 16 16"><use href="#skt"/></svg><span class="tx g">草图 (3) "SKETCH_0...</span></div><svg class="okc"><use href="#ok"/></svg></div>
        <div class="row"><div class="nm ch"><span class="twig"></span><svg class="cb"><use href="#cb"/></svg><svg class="ri" viewBox="0 0 16 16"><path d="M1 3h4l1 10-2 2z" fill="#3a5ac0"/><path d="M5 2h10v5l-2 8H8z" fill="#f0a020" stroke="#a06010" stroke-width=".6"/><path d="M9 2v13" stroke="#c03030"/></svg><span class="tx">旋转 (2)</span></div><svg class="okc"><use href="#ok"/></svg></div>
        <div class="row"><div class="nm ch"><span class="twig"></span><svg class="cb"><use href="#cb"/></svg><svg class="ri" viewBox="0 0 16 16"><use href="#skt"/></svg><span class="tx g">草图 (1) "SKETCH_0...</span></div><svg class="okc"><use href="#ok"/></svg></div>
        <div class="row"><div class="nm ch"><span class="twig last"></span><svg class="cb"><use href="#cb"/></svg><svg class="ri" viewBox="0 0 16 16"><path d="M2 2 10 9 2 14" fill="none" stroke="#222"/><path d="M2 9l13-4" stroke="#3a9a4a" stroke-dasharray="2 1"/><path d="M2 9l12 5" stroke="#c0392b"/></svg><span class="tx g">基准坐标系 (0)</span></div><svg class="okc"><use href="#ok"/></svg></div>
        <div class="row"></div><div class="row"></div><div class="row"></div><div class="row"></div>
      </div>
      <div class="hscroll"><svg width="6" height="9" viewBox="0 0 6 9"><path d="M5 1 1 4.500 5 8" fill="none" stroke="#555" stroke-width="1.300"/></svg><i class="thumb"></i><svg width="6" height="9" viewBox="0 0 6 9"><path d="M1 1l4 3.500L1 8" fill="none" stroke="#555" stroke-width="1.300"/></svg></div>
      <div class="hband"></div>
    </div>
  </section>

  <section class="viewport">
    <div class="docstrip">
      <div class="doctab">
        <svg width="13" height="15" viewBox="0 0 13 15"><path d="M2 3h6l4 3v8H2z" fill="#fff"/><circle cx="6" cy="8" r="4" fill="#2a66b8"/><path d="M6 1v6" stroke="#e04030" stroke-width="2"/></svg>
        <span class="dt">CATICS-5-H06A.prt</span>
        <svg class="dt-i" width="11" height="12" viewBox="0 0 11 12"><path d="M1 1h6l3 3v7H1z" fill="none" stroke="#fff" stroke-width="1.400"/><rect x="3" y="1" width="4" height="3" fill="#fff"/></svg>
        <svg class="dt-x" width="9" height="9" viewBox="0 0 9 9"><path d="M1 1l7 7M8 1 1 8" stroke="#fff" stroke-width="1.800"/></svg>
      </div>
    </div>
    <div class="canvas">
      <svg class="model" viewBox="383 203 1537 815" width="1537" height="815">
        <defs>
          <linearGradient id="band" gradientUnits="userSpaceOnUse" x1="555" x2="1233" y1="0" y2="0"><stop offset="0" stop-color="#e49200"/><stop offset=".1" stop-color="#e08e00"/><stop offset=".2" stop-color="#bc7a00"/><stop offset=".33" stop-color="#d58600"/><stop offset=".65" stop-color="#e28d00"/><stop offset="1" stop-color="#d08400"/></linearGradient>
          <linearGradient id="inner" gradientUnits="userSpaceOnUse" x1="588" x2="1206" y1="0" y2="0"><stop offset="0" stop-color="#cc8000"/><stop offset=".4" stop-color="#e08c00"/><stop offset=".65" stop-color="#d58500"/><stop offset=".85" stop-color="#b67500"/><stop offset="1" stop-color="#b47300"/></linearGradient>
          <linearGradient id="base" gradientUnits="userSpaceOnUse" x1="539" x2="1212" y1="0" y2="0"><stop offset="0" stop-color="#e69200"/><stop offset=".25" stop-color="#c07b00"/><stop offset=".65" stop-color="#e08c00"/><stop offset="1" stop-color="#cb8100"/></linearGradient>
          <linearGradient id="shaft" gradientUnits="userSpaceOnUse" x1="723" x2="1004" y1="0" y2="0"><stop offset="0" stop-color="#c67d00"/><stop offset=".12" stop-color="#b97800"/><stop offset=".45" stop-color="#e18c00"/><stop offset=".7" stop-color="#d48600"/><stop offset="1" stop-color="#a76c00"/></linearGradient>
          <linearGradient id="cone" gradientUnits="userSpaceOnUse" x1="670" x2="740" y1="0" y2="0"><stop offset="0" stop-color="#e88f00"/><stop offset="1" stop-color="#ffb000"/></linearGradient>
          <linearGradient id="cone2" gradientUnits="userSpaceOnUse" x1="1110" x2="1185" y1="0" y2="0"><stop offset="0" stop-color="#ffb000"/><stop offset=".55" stop-color="#ff9e00"/><stop offset="1" stop-color="#e08c00"/></linearGradient>
          <linearGradient id="dark" gradientUnits="userSpaceOnUse" x1="1020" x2="1104" y1="0" y2="0"><stop offset="0" stop-color="#8f5f00"/><stop offset=".7" stop-color="#a56a00"/><stop offset="1" stop-color="#c07c00"/></linearGradient>
          <linearGradient id="hole" gradientUnits="userSpaceOnUse" x1="770" x2="960" y1="0" y2="0"><stop offset="0" stop-color="#cf8300"/><stop offset=".6" stop-color="#e28d00"/><stop offset="1" stop-color="#d18400"/></linearGradient>
          <linearGradient id="rib" gradientUnits="userSpaceOnUse" x1="560" x2="640" y1="0" y2="0"><stop offset="0" stop-color="#db8a00"/><stop offset=".6" stop-color="#e08c00"/><stop offset=".85" stop-color="#b97600"/><stop offset="1" stop-color="#d08400"/></linearGradient>
          <clipPath id="cInner"><ellipse cx="897" cy="355" rx="310" ry="78" transform="rotate(3 897 355)"/></clipPath>
          <clipPath id="cHole"><ellipse cx="890" cy="460" rx="265" ry="78" transform="rotate(3 890 460)"/></clipPath>
        </defs>
        <g stroke="#4a3200" stroke-width=".7" stroke-linejoin="round">
          <path d="M735 740H1006L996 958A136 35 3 0 1 725 950Z" fill="url(#shaft)"/>
          <path d="M542.500 642.500A335 86 3 0 0 1211.500 677.500L1211 720A335 86 3 0 1 539 682Z" fill="url(#base)"/>
          <ellipse cx="877" cy="660" rx="335" ry="86" transform="rotate(3 877 660)" fill="#ffb400"/>
          <path d="M832 573 950 586 905 587C880 582 855 580 832 583Z" fill="#d88900"/>
          <ellipse cx="937" cy="605" rx="44" ry="17" transform="rotate(3 937 605)" fill="#a86c00"/>
          <ellipse cx="937" cy="600" rx="44" ry="15" transform="rotate(3 937 600)" fill="#ffb400"/>
          <ellipse cx="945" cy="601" rx="35" ry="11" transform="rotate(3 945 601)" fill="#dd8b00"/>
          <ellipse cx="860" cy="667" rx="108" ry="33" transform="rotate(3 860 667)" fill="#a86c00"/>
          <ellipse cx="860" cy="662" rx="108" ry="33" transform="rotate(3 860 662)" fill="#ffb400"/>
          <ellipse cx="860" cy="659" rx="91" ry="27" transform="rotate(3 860 659)" fill="url(#hole)"/>
          <ellipse cx="802" cy="723" rx="57" ry="15" transform="rotate(3 802 723)" fill="#a86c00"/>
          <ellipse cx="802" cy="719" rx="57" ry="15" transform="rotate(3 802 719)" fill="#ffb400"/>
          <ellipse cx="802" cy="718" rx="41" ry="10" transform="rotate(3 802 718)" fill="#de8c00"/>
          <ellipse cx="1142" cy="702" rx="36" ry="11" transform="rotate(3 1142 702)" fill="#b87700"/>
          <ellipse cx="1141" cy="695" rx="36" ry="12" transform="rotate(3 1141 695)" fill="#e08c00"/>
          <path d="M1186 658 1203 655 1212 677 1200 695 1191 692 1194 680Z" fill="#e08c00"/>
          <path d="M675 502 825 530 833 608C830 611 822 613 816 613L736 619 702 617Z" fill="#ffb000"/>
          <path d="M675 502 728 515 736 619 702 617Z" fill="url(#cone)"/>
          <path d="M807 526 825 530 833 608C830 611 822 613 816 613Z" fill="#f09a00"/>
          <path d="M568 457 556 663 622 687 636 488Z" fill="url(#rib)"/>
          <path d="M580 463 624 650M614 482 632 570" fill="none"/>
          <path d="M558 665 578 663 622 687V697Z" fill="#ffb400"/>
          <path d="M645 493 631 698 699 705C708 705 716 702 719 698L675 502Z" fill="#e08c00"/>
          <path d="M651 495 699 705 719 698 675 502Z" fill="url(#cone)"/>
          <path d="M631 698 644 703 660 707 699 705" fill="none"/>
          <path d="M973 537 922 733 935 747 963 745 978 537Z" fill="#d98800"/>
          <path d="M978 537 993 537 978 738 965 745Z" fill="#e89500"/>
          <path d="M993 537 1070 533 1019 735 978 738Z" fill="#a96c00"/>
          <path d="M1070 533 1104 529 1054 732 1019 735Z" fill="url(#dark)"/>
          <path d="M1104 529 1094 730 1054 732Z" fill="#b77600"/>
          <path d="M1104 529 1110 527 1106 738 1094 730Z" fill="#e08c00"/>
          <path d="M978 738 1080 729 1094 738 978 748Z" fill="#ffb400"/>
          <path d="M1119 525 1109 680 1133 672 1189 508 1142 518Z" fill="url(#cone2)"/>
          <path d="M1189 508 1213 495 1203 655 1133 672Z" fill="#d98800"/>
          <path d="M559.500 338.300A338 86 3 0 0 1234.500 373.700L1226.500 470.600A336 85 3 0 1 555.500 435.400Z" fill="url(#band)"/>
          <ellipse cx="897" cy="356" rx="338" ry="86" transform="rotate(3 897 356)" fill="#ffb400"/>
          <g clip-path="url(#cInner)">
            <ellipse cx="897" cy="355" rx="310" ry="78" transform="rotate(3 897 355)" fill="url(#inner)"/>
            <ellipse cx="890" cy="430" rx="300" ry="80" transform="rotate(3 890 430)" fill="#ffb400"/>
            <ellipse cx="890" cy="436" rx="286" ry="78" transform="rotate(3 890 436)" fill="url(#inner)"/>
            <ellipse cx="890" cy="460" rx="265" ry="78" transform="rotate(3 890 460)" fill="#c4c6c8"/>
            <g clip-path="url(#cHole)">
              <path d="M680 380H818L816 440 680 420Z" fill="#ffb000"/>
              <path d="M680 380H716L718 432 680 420Z" fill="#eca000"/>
              <path d="M795 380H815L816 440H797Z" fill="#f09a00"/>
            </g>
          </g>
          <ellipse cx="897" cy="355" rx="310" ry="78" transform="rotate(3 897 355)" fill="none"/>
        </g>
        <g class="triad">
          <path d="M437 920 459 917 473 923V947L453 950 437 943ZM437 920 453 926 473 923M453 926V950" fill="#c8cbce" fill-opacity=".55" stroke="#a8abae"/>
          <path d="M449 949 451 914" stroke="#1b3fc0" stroke-width="3"/><path d="M451 908l-4 8h8z" fill="#1b3fc0"/>
          <path d="M447 951 430 941" stroke="#3c8a45" stroke-width="2.500"/><path d="M426 939l8 0-3 5z" fill="#3c8a45"/>
          <path d="M452 951 482 948" stroke="#c04040" stroke-width="2.500"/><path d="M488 947l-8-3v6z" fill="#c04040"/>
          <circle cx="449" cy="950" r="4.500" fill="#b8babc"/>
          <text x="451" y="908" class="tz">Z</text><text x="424" y="944" class="ty">Y</text><text x="492" y="952" class="tx3">X</text>
        </g>
      </svg>
    </div>

    <div class="dialog">
      <div class="dlg-title">
        <svg width="14" height="14" viewBox="0 0 14 14"><circle cx="7" cy="7" r="4" fill="none" stroke="#fff" stroke-width="3"/><circle cx="7" cy="7" r="6" fill="none" stroke="#fff" stroke-dasharray="2 2.700" stroke-width="2"/></svg>
        <span class="dlg-name">信息</span>
        <b class="dlg-q">?</b>
        <svg class="dc" width="9" height="9" viewBox="0 0 9 9"><rect y="7" width="8" height="2" fill="#fff"/></svg>
        <svg class="dc" width="13" height="11" viewBox="0 0 13 11"><rect x=".7" y=".7" width="11" height="9.500" fill="none" stroke="#fff" stroke-width="1.300"/></svg>
        <svg class="dc" width="12" height="12" viewBox="0 0 12 12"><path d="M1 1l10 10M11 1 1 11" stroke="#fff" stroke-width="1.800"/></svg>
      </div>
      <div class="dlg-tools">
        <span class="db"><svg width="24" height="24" viewBox="0 0 24 24"><path d="M2 2h17l3 3v17H2z" fill="#2a3f80" stroke="#16244c"/><rect x="6" y="3" width="11" height="7" fill="#e4e8f0"/><rect x="7" y="14" width="11" height="8" fill="#111"/><path d="M8 4 21 20l2 3-5-2L6 6z" fill="#e8c040" stroke="#8a6a10" stroke-width=".5"/><path d="M21 20l2 3-4-1z" fill="#d03030"/></svg></span>
        <span class="db"><svg width="24" height="24" viewBox="0 0 24 24"><path d="M8 3h10v8H8z" fill="#fff" stroke="#999"/><path d="M2 12l5-3h14l2 4v6l-4 2H4z" fill="#d4d8dc" stroke="#8a8e92"/><path d="M4 17h16" stroke="#555"/></svg></span>
        <span class="db"><svg width="24" height="24" viewBox="0 0 24 24"><path d="M8 15 21 4M6 8l14 8" stroke="#a8943a" stroke-width="1.800"/><circle cx="5" cy="7" r="3" fill="none" stroke="#b8a030" stroke-width="1.500"/><circle cx="7" cy="18" r="3" fill="none" stroke="#b8a030" stroke-width="1.500"/></svg></span>
        <span class="db"><svg width="24" height="24" viewBox="0 0 24 24"><path d="M3 2h9l3 3v10H3z" fill="#eef2fa" stroke="#6a7ab0"/><path d="M9 8h8l4 4v10H9z" fill="#dfe6f5" stroke="#6a7ab0"/><path d="M11 13h8M11 16h8M11 19h8" stroke="#6a7ab0"/></svg></span>
        <span class="db"><svg width="24" height="24" viewBox="0 0 24 24"><rect x="3" y="4" width="16" height="18" fill="#f0ddb0" stroke="#8a7040"/><rect x="8" y="2" width="6" height="4" fill="#888" stroke="#555"/><path d="M10 9h9l3 3v11H10z" fill="#eef2fa" stroke="#6a7ab0"/><path d="M12 14h8M12 17h8M12 20h8" stroke="#6a7ab0"/></svg></span>
        <span class="db"><svg width="20" height="20" viewBox="0 0 20 20"><path d="M4 3l12 14M16 3 4 17" stroke="#222" stroke-width="2"/></svg></span>
        <span class="db"><svg width="22" height="22" viewBox="0 0 22 22"><rect x="1" y="1" width="20" height="20" fill="#fdfbfb" stroke="#9c1c1c" stroke-width="1.400"/><circle cx="11" cy="11" r="5" fill="none" stroke="#9c1c1c"/><path d="M11 3v16M3 11h16" stroke="#9c1c1c"/></svg></span>
        <span class="db"><svg width="26" height="20" viewBox="0 0 26 20"><path d="M3 6 8 2h4l1 5 1-5h4l5 4 2 8-5 4-5-4-1-3-2 3-5 4-6-4z" fill="#444"/><circle cx="7" cy="13" r="3" fill="#8aa8c8"/><circle cx="19" cy="13" r="3" fill="#8aa8c8"/></svg></span>
        <span class="db db-on"><svg width="22" height="24" viewBox="0 0 22 24"><rect x="1" y="1" width="20" height="22" fill="#fff" stroke="#222"/><path d="M3 6h16M3 10h16M3 14h16M13 18h4v-2M5 18h8" fill="none" stroke="#222"/><path d="M9 18l3-2v4z" fill="#222"/></svg></span>
        <span class="db"><svg width="16" height="6" viewBox="0 0 16 6"><rect width="16" height="5" fill="#1a3fb0"/></svg></span>
      </div>
      <div class="dlg-box">
        <div class="dlg-content">
          <table class="info">
            <tr><th>信息列表创建者</th><td>admin</td></tr>
            <tr><th>日期</th><td>09-Sep-2020 10:07:24</td></tr>
            <tr><th>当前工作部件</th><td>F:\UG_LEARN\CATICS-5-H06A.prt</td></tr>
            <tr><th>节点名</th><td>desktop-25gjil6</td></tr>
          </table>
          <div class="report">
            <div class="rl">测量质量属性</div>
            <div class="rl"></div>
            <div class="rl">显示的质量属性值</div>
            <div class="rl"><span class="lab">体积</span><span class="mono">= 290175.117026039 mm³</span></div>
            <div class="rl"><span class="lab">面积</span><span class="mono">= 116046.524156245 mm²</span></div>
            <div class="rl"><span class="lab">质量</span><span class="mono">=    2.272256878 kg</span></div>
            <div class="rl"><span class="lab">重量</span><span class="mono">=   22.283227916 N</span></div>
            <div class="rl"><span class="lab wide">回转半径</span><span class="mono">=   67.574693564 mm</span></div>
            <div class="rl"><span class="lab">质心</span><span class="mono">=    0.000000000,</span></div>
            <div class="rl"><span class="mono">-0.000000000,   78.545625573 mm</span></div>
            <div class="rl"></div>
            <div class="rl"><span class="mono">=============================================================</span></div>
            <div class="rl">详细的质量属性</div>
            <div class="rl"><span class="lab short">使用精度计算的分析</span><span class="mono">0.990000000</span></div>
          </div>
        </div>
        <div class="vscroll">
          <svg width="9" height="6" viewBox="0 0 9 6"><path d="M1 5l3.500-3.500L8 5" fill="none" stroke="#555" stroke-width="1.300"/></svg>
          <i class="vthumb"></i>
          <svg width="9" height="6" viewBox="0 0 9 6"><path d="M1 1l3.500 3.500L8 1" fill="none" stroke="#555" stroke-width="1.300"/></svg>
        </div>
      </div>
    </div>
  </section>
</main>

<footer class="status">
  <span>选择对象并使用 MB3，或者双击某一对象</span>
  <div class="st-icons">
    <svg width="16" height="16" viewBox="0 0 16 16"><rect width="16" height="16" fill="#c9c9c9"/><path d="M4 14 9 3l3 2-1 5 3 1-7 3z" fill="#eee" stroke="#888"/></svg>
    <svg width="16" height="16" viewBox="0 0 16 16"><path d="M1 4V1h3M12 1h3v3M15 12v3h-3M4 15H1v-3" fill="none" stroke="#8a939b"/><rect x="4" y="3" width="8" height="10" fill="#fff" stroke="#1f5c96"/><rect x="5" y="6" width="6" height="6" fill="#3f86c6"/></svg>
  </div>
</footer>

<footer class="taskbar">
  <span class="start"><svg width="17" height="17" viewBox="0 0 17 17"><path d="M0 2.500 7 1.500v6.500H0zM8 1.300 17 0v8H8zM0 9h7v6.500L0 14.500zM8 9h9v8l-9-1.300z" fill="#fff"/></svg></span>
  <div class="search">
    <svg width="18" height="18" viewBox="0 0 18 18"><circle cx="11" cy="7" r="5.500" fill="none" stroke="#333" stroke-width="1.200"/><path d="M7 11 1.500 17" stroke="#333" stroke-width="1.300"/></svg>
    <span>在这里输入你要搜索的内容</span>
  </div>
  <span class="tk-i w1"><svg width="16" height="16" viewBox="0 0 16 16"><circle cx="8" cy="8" r="6.500" fill="none" stroke="#fff" stroke-width="2"/></svg></span>
  <span class="tk-i w2"><svg width="16" height="16" viewBox="0 0 16 16"><path d="M0 0h12M0 16h12" stroke="#fff"/><rect x="1" y="3.500" width="9" height="9" fill="none" stroke="#fff"/><path d="M13 2h3M13 8h3M13 14h3" stroke="#fff" stroke-width="1.500"/></svg></span>
  <span class="tk-i w3 pin"><svg width="22" height="20" viewBox="0 0 22 20"><path d="M1 3h7l2 2h11v14H1z" fill="#f5c83a"/><path d="M1 7h20v12H1z" fill="#fad75e"/><rect x="7" y="12" width="8" height="7" fill="#3f8fc0"/></svg></span>
  <span class="tk-i w4 pin"><svg width="20" height="22" viewBox="0 0 20 22"><path d="M19 14C19 4 15 0 9 0 4 0 0 5 0 11s4 11 10 11c4 0 7-1 9-3v-4c-2 2-4 3-7 3-3 0-6-2-6-5h13zM6 10c0-3 2-5 4-5s4 2 4 5z" fill="#0f7cd8"/></svg></span>
  <span class="tk-i w5 pin act"><svg width="24" height="26" viewBox="0 0 24 26"><path d="M8 1 15 3 16 9 10 13 6 7z" fill="#d82a4a"/><path d="M3 12C6 20 16 24 22 10L18 4C18 14 10 18 3 12z" fill="#2f8ad8"/><path d="M2 20C8 26 18 22 23 12 18 19 10 22 4 18z" fill="#e8c040"/></svg></span>
  <div class="tray">
    <svg width="12" height="8" viewBox="0 0 12 8"><path d="M1 7l5-5.500L11 7" fill="none" stroke="#fff" stroke-width="1.200"/></svg>
    <svg class="tr-net" width="16" height="14" viewBox="0 0 16 14"><rect x="4" y=".5" width="11.500" height="9" fill="none" stroke="#fff"/><rect x=".5" y=".5" width="3" height="6" fill="#20262b" stroke="#fff"/><path d="M10 10v3M6 13h8" stroke="#fff"/></svg>
    <svg class="tr-vol" width="16" height="14" viewBox="0 0 16 14"><path d="M1 5h3l4-4v12l-4-4H1z" fill="none" stroke="#fff"/><path d="M10 4c1.500 2 1.500 4 0 6M12.500 2.500c2.500 3 2.500 6 0 9" fill="none" stroke="#fff"/></svg>
    <span class="ime">英</span>
    <span class="clock"><span>10:09</span><span>2020/9/9</span></span>
    <svg class="notif" width="16" height="15" viewBox="0 0 16 15"><path d="M.5.500h15v10H10l-2 3-2-3H.5z" fill="none" stroke="#fff"/></svg>
  </div>
</footer>

<div class="wm">
  <svg class="wm-logo" width="72" height="82" viewBox="0 0 72 82">
    <path d="M36 0 71 20v41L36 82 1 61V20z" fill="#4fa6d8" fill-opacity=".62"/>
    <path d="M36 0C20 12 6 20 1 20v41l20-30 15-10 26-14z" fill="#cfe6f5" fill-opacity=".6"/>
    <path d="M1 61C18 44 40 44 71 46V61L36 82z" fill="#0a5a86" fill-opacity=".6"/>
    <path d="M36 24 54 34V54L36 62 18 54V34z" fill="#dff0fa" fill-opacity=".75"/>
    <path d="M36 44 54 34V54L36 62z" fill="#6fc0ea" fill-opacity=".65"/>
  </svg>
  <div class="wm-text">3D世界网</div>
  <div class="wm-url">WWW.3DSJW.COM</div>
</div>
</body>
</html>
```
FILE: styles.css
```
* { box-sizing: border-box; }
html, body { margin: 0; padding: 0; }
body {
  width: 1920px; height: 1080px; overflow: hidden; position: relative;
  display: flex; flex-direction: column; background: #fff; color: #222;
  font-family: "Liberation Sans", "Noto Sans CJK SC", sans-serif; font-size: 12px;
}
svg { display: block; flex: none; }
.defs { position: absolute; width: 0; height: 0; }
i { display: block; font-style: normal; }
.tk { width: 7px; height: 4px; }

/* title bar */
.titlebar { height: 26px; display: flex; align-items: center; position: relative; flex: none; }
.titlebar::before { content: ""; position: absolute; left: 840px; top: 0; width: 240px; height: 1px; background: linear-gradient(90deg, #2c7ea0 20%, #dcdcdc 20%); }
.qat {
  width: 1062px; height: 26px; display: grid; align-items: center; justify-items: center; padding-bottom: 2px;
  grid-template-columns: 42px 1px 31px 1px 26px 10px 26px 1px 28px 18px 29px 1px 26px 10px 4px 1px 27px 1px 26px 51px 15px 29px 8px 14px;
}
.nx { font: bold 22px "Liberation Sans", sans-serif; color: #7b8c99; letter-spacing: .5px; justify-self: start; padding-left: 4px; }
.vs { width: 1px; height: 20px; background: #d4d4d4; }
.q { display: flex; align-items: center; justify-content: center; }
.qt { font-size: 11px; white-space: nowrap; justify-self: start; }
.qt-w { padding-left: 5px; }
.doc-title { font-size: 13px; width: 80px; white-space: nowrap; padding-bottom: 4px; }
.top-right { margin-left: auto; display: flex; align-items: center; height: 26px; }
.siemens { font: bold 13px "Liberation Sans", sans-serif; color: #17918f; letter-spacing: .3px; margin-right: 22px; padding-top: 3px; }
.wc { width: 24px; display: flex; justify-content: center; }

/* tabs */
.tabs { height: 28px; flex: none; background: #dadada; display: flex; align-items: center; font-size: 13px; position: relative; }
.file { width: 81px; height: 28px; background: #5a9fb9; color: #fff; display: flex; align-items: center; justify-content: center; padding-bottom: 2px; }
.tab { height: 28px; display: flex; align-items: center; white-space: nowrap; padding-bottom: 2px; }
.tab.tb-a { margin-left: 15px; width: 39px; }
.tab.on { background: #fff; width: 52px; justify-content: center; height: 28px; border-top: 1px solid #c8c8c8; }
.tab.tb-b { margin-left: 13px; width: 78px; }
.tab.tb-c { width: 52px; }
.tab-right { margin-left: auto; display: flex; align-items: center; height: 28px; padding-right: 8px; }
.upload { width: 103px; height: 25px; display: flex; border: 1px solid #57a4d8; border-radius: 4px; background: linear-gradient(#e0f4ff, #bfe6fb); overflow: hidden; }
.up-ic { width: 29px; background: #2b9df0; display: flex; align-items: center; justify-content: center; }
.up-tx { flex: 1; font-size: 12px; color: #78bce6; display: flex; align-items: center; justify-content: center; }
.find { width: 20px; height: 17px; background: #fff; border: 1px solid #aaa; display: flex; align-items: center; justify-content: center; }
.m1 { margin-left: 10px; }
.m2 { margin-left: 12px; }
.m3 { margin-left: 13px; }

/* ribbon */
.ribbon { height: 94px; flex: none; border-bottom: 1px solid #d8d8d8; display: flex; padding-top: 5px; position: relative; font-size: 11px; }
.group { display: flex; flex-direction: column; height: 85px; border-right: 1px solid #dedede; }
.g1 { width: 237px; } .g2 { width: 276px; } .g3 { width: 152px; } .g4 { width: 180px; }
.g5 { width: 152px; } .g6 { width: 160px; } .g7 { width: 43px; }
.gitems { height: 71px; display: flex; flex: none; }
.g1 .gitems, .g2 .gitems, .g4 .gitems, .g6 .gitems { padding-left: 8px; }
.g3 .gitems { padding-left: 12px; }
.g5 .gitems { padding-left: 9px; }
.g7 .gitems { padding-left: 4px; }
.big { width: 52px; display: flex; flex-direction: column; align-items: center; white-space: nowrap; flex: none; }
.big.narrow { width: 40px; }
.big-ic { height: 36px; display: flex; align-items: flex-start; justify-content: center; }
.smalls { margin-top: -4px; display: flex; flex-direction: column; flex: none; }
.s1 { width: 76px; margin-left: 7px; }
.s2 { margin-left: 6px; }
.s3 { width: 81px; }
.s4 { margin-left: 6px; }
.s5, .s6 { margin-left: 5px; }
.sm { height: 22px; display: flex; align-items: center; gap: 4px; white-space: nowrap; }
.sm svg { width: 16px; height: 16px; }
.more-col { width: 37px; display: flex; flex-direction: column; align-items: center; margin-top: -1px; gap: 0; }
.more-box { width: 37px; height: 36px; border: 1px solid #dcdcdc; border-radius: 3px; display: flex; align-items: center; justify-content: center; margin-bottom: 1px; }
.more-col .tk { margin-top: 6px; }
.glabel { height: 14px; display: flex; align-items: center; color: #2f7f93; }
.glabel span { flex: 1; text-align: center; padding-left: 8px; white-space: nowrap; }
.glabel .tk { margin: 0 9px 0 8px; }
.rib-end { position: absolute; right: 6px; top: 82px; }

/* selection bar */
.selbar { height: 32px; flex: none; border-bottom: 1px solid #a3a3a3; display: flex; align-items: center; padding-left: 9px; position: relative; font-size: 11px; }
.menu-ic { width: 21px; }
.menu-tx { width: 43px; white-space: nowrap; }
.sel-sep { width: 1px; height: 24px; background: #d8d8d8; margin: 0 13px 0 5px; }
.combo { height: 20px; border: 1px solid #9a9a9a; display: flex; align-items: center; justify-content: space-between; padding: 0 6px 0 3px; font-size: 11.500px; white-space: nowrap; }
.c-a { width: 133px; margin-right: 9px; }
.c-b { width: 140px; margin-right: 5px; }
.tools {
  display: grid; align-items: center;
  grid-template-columns: 26px 21px 18px 21px 23px 26px 24px 19px 20px 23px 27px 24px 26px 22px 28px 23px 26px 26px 25px 24px 25px 24px 25px 25px 20px 19px 25px 25px 26px 23px 27px 18px 19px 17px 20px 18px 18px 18px 13px 20px;
}
.c { width: 20px; height: 20px; display: flex; align-items: center; justify-content: center; }
.c svg:not(.tk) { width: 20px; height: 20px; }
.c.on { background: #c9e2ea; outline: 1px solid #c9e2ea; }
.tool-sep { width: 1px; height: 24px; background: #d8d8d8; }
.sel-end { position: absolute; right: 6px; top: 13px; }

/* main */
.main { flex: 1; display: flex; min-height: 0; }
.rail {
  width: 33px; flex: none; background: #dcdcdc; border-right: 1px solid #9a9a9a;
  display: grid; align-content: start; justify-items: center;
  grid-template-rows: 47px 44px 33px 50px 53px 53px 54px 43px 42px 42px 32px;
}
.r-cell { width: 30px; height: 32px; display: flex; align-items: center; justify-content: center; }
.r-cell:first-child { height: 26px; }
.r-on { height: 45px; width: 31px; margin-left: 1px; background: #fff; border: 1px solid #a8a8a8; border-right: 0; }

.nav { width: 350px; flex: none; padding: 0 9px 6px 5px; display: flex; flex-direction: column; border-right: 1px solid #a3a3a3; }
.nav-head { height: 28px; display: flex; align-items: center; justify-content: space-between; padding: 0 6px 2px 4px; color: #333; }
.nav-max { width: 12px; height: 11px; border: 1px solid #222; border-top-width: 2px; }
.tree { flex: 1; display: flex; flex-direction: column; border: 1px solid #c8c8c8; min-height: 0; }
.thead { height: 22px; flex: none; display: grid; grid-template-columns: 200px 100px 33px; background: #f0f0f0; border-bottom: 1px solid #cfcfcf; color: #444; align-items: center; }
.thead span { padding: 0 0 2px 6px; height: 22px; display: flex; align-items: center; border-left: 1px solid #d4d4d4; }
.thead span:first-child { border-left: 0; }
.th1 { gap: 17px; }
.sort { width: 9px; height: 5px; }
.tbody {
  flex: 1; min-height: 0;
  background: linear-gradient(#e8e8e8, #e8e8e8) 199px 0 / 1px 100% no-repeat, linear-gradient(#e8e8e8, #e8e8e8) 299px 0 / 1px 100% no-repeat;
}
.row { height: 20px; display: grid; grid-template-columns: 199px 1fr; align-items: center; border-bottom: 1px solid #ececec; }
.row:nth-child(even) { background: rgba(0, 0, 0, .022); }
.nm { height: 19px; display: flex; align-items: center; padding-left: 10px; white-space: nowrap; overflow: hidden; }
.nm.ch { padding-left: 29px; }
.twig { width: 10px; height: 20px; flex: none; position: relative; border-left: 1px dotted #8c8c8c; }
.twig.last { height: 10px; align-self: flex-start; }
.twig::after { content: ""; position: absolute; left: 0; top: 9px; width: 10px; border-top: 1px dotted #8c8c8c; }
.ch .twig { width: 11px; }
.pm { position: absolute; z-index: 1; left: -5px; top: 4px; width: 9px; height: 9px; background: #fff; border: 1px solid #c8c8c8; font: 10px/7px "DejaVu Sans", sans-serif; color: #111; text-align: center; }
.nm .ri { width: 15px; height: 15px; margin-right: 4px; }
.rc { width: 13px; height: 13px; margin: 0 2px; }
.cb { width: 13px; height: 13px; margin: 0 2px 0 0; }
.cb.warn { margin-left: 3px; margin-right: -1px; }
.warn-ic { width: 12px; height: 11px; margin-left: -18px; margin-right: 6px; margin-top: -7px; z-index: 1; }
.tx { font-weight: 400; font-size: 12px; color: #333; padding-bottom: 2px; }
b.tx { font-weight: 700; color: #111; }
.tx.g { color: #a4a4a4; }
.okc { width: 14px; height: 14px; margin-left: 6px; }

.hscroll { height: 15px; flex: none; margin: 0 1px; background: #f0f0f0; display: flex; align-items: center; justify-content: space-between; padding: 0 3px; }
.thumb { width: 245px; height: 15px; background: #cdcdcd; margin-left: 6px; margin-right: auto; }
.hband { height: 5px; flex: none; margin: 3px 0 0; background: #dcdcdc; border: 1px solid #b8b8b8; }

/* viewport */
.viewport { flex: 1; display: flex; flex-direction: column; min-width: 0; position: relative; }
.docstrip { height: 23px; flex: none; padding-left: 4px; background: #fff; display: flex; align-items: flex-start; }
.doctab { width: 170px; height: 23px; background: #5a9fb9; color: #fff; display: flex; align-items: center; padding-left: 6px; gap: 3px; font-size: 12.500px; white-space: nowrap; }
.dt { width: 113px; }
.dt-x { margin-left: 2px; }
.canvas { flex: 1; min-height: 0; background: linear-gradient(#b9bcbf, #e5e6e8); position: relative; overflow: hidden; }
.model { width: 1537px; height: 815px; }
.triad text { font: 13px "Liberation Sans", sans-serif; }
.tz { fill: #3a50c0; text-anchor: middle; }
.ty { fill: #4a9a50; }
.tx3 { fill: #d05050; }

/* dialog */
.dialog { position: absolute; left: 916px; top: 171px; width: 525px; height: 432px; background: #f0f0f0; border: 1px solid #a8a8a8; display: flex; flex-direction: column; }
.dlg-title { height: 28px; flex: none; background: #569ab5; color: #fff; display: flex; align-items: center; padding: 0 0 1px 6px; }
.dlg-name { margin-left: 7px; flex: 1; }
.dlg-q { font: bold 14px "Liberation Sans", sans-serif; margin-right: 11px; }
.dc { margin-right: 11px; }
.dc:last-child { margin-right: 6px; }
.dlg-tools { height: 39px; flex: none; display: flex; gap: 3px; padding: 4px 0 0 10px; }
.db { width: 31px; height: 32px; border: 1px solid #b8b8b8; display: flex; align-items: center; justify-content: center; }
.db-on { background: #ffe39a; border-color: #ffe39a; }
.dlg-box { height: 352px; margin: 0 9px 0 9px; border: 1px solid #555; display: flex; flex: none; background: #f0f0f0; }
.dlg-content { width: 479px; flex: none; padding: 18px 0 0 8px; }
.info { width: 471px; border-collapse: collapse; font-size: 12px; background: #fff; table-layout: fixed; }
.info th, .info td { height: 20px; padding: 0 0 0 3px; border: 1px solid #e0e0e0; text-align: left; white-space: nowrap; }
.info th { width: 226px; font-weight: 700; color: #111; }
.info td { color: #333; }
.info tr:nth-child(even) { background: #f5f5f5; }
.report { margin-top: 21px; height: 231px; background: #fff; padding: 4px 0 0 5px; width: 471px; font-size: 12.800px; color: #222; }
.rl { height: 15px; line-height: 15px; display: flex; white-space: nowrap; }
.lab { width: 235.500px; }
.lab.wide { width: 247px; }
.lab.short { width: 144px; }
.mono { font: 11.500px/15px "DejaVu Sans Mono", monospace; white-space: pre; color: #222; }
.vscroll { flex: 1; display: flex; flex-direction: column; align-items: center; padding-top: 6px; margin-left: 8px; background: #f0f0f0; }
.vthumb { width: 15px; height: 71px; background: #cdcdcd; margin: 6px 0 auto; }
.vscroll svg:last-child { margin-bottom: 5px; }

/* status */
.status { height: 22px; flex: none; border-top: 1px solid #a3a3a3; display: flex; align-items: center; padding: 0 55px 3px 3px; justify-content: space-between; font-size: 11px; color: #111; }
.st-icons { display: flex; gap: 4px; }

/* taskbar */
.taskbar { height: 40px; flex: none; background: #1f262b; display: flex; align-items: center; color: #fff; position: relative; }
.start { width: 48px; display: flex; justify-content: center; }
.search { width: 344px; height: 40px; background: #f2f2f2; display: flex; align-items: center; padding-left: 10px; gap: 12px; color: #555; font-size: 14px; }
.tk-i { height: 40px; display: flex; align-items: center; justify-content: center; flex: none; }
.w1 { width: 48px; }
.w2 { width: 46px; }
.w3 { width: 40px; margin-left: 10px; }
.w4 { width: 40px; margin-left: 9px; }
.w5 { width: 44px; margin-left: 5px; }
.pin { border-bottom: 2px solid #76b9ed; }
.act { background: #3b4146; }
.tray { margin-left: auto; display: flex; align-items: center; padding-right: 25px; }
.tr-net { margin-left: 10px; }
.tr-vol { margin-left: 8px; }
.ime { font-size: 14px; margin-left: 8px; width: 15px; }
.clock { margin-left: 5px; width: 70px; display: flex; flex-direction: column; align-items: center; line-height: 18px; font-size: 12.500px; }
.notif { margin-left: 13px; }

/* watermark */
.wm { position: absolute; left: 1637px; top: 985px; width: 270px; height: 85px; pointer-events: none; }
.wm-logo { position: absolute; left: 0; top: 0; }
.wm-text { position: absolute; left: 80px; top: 8px; font: bold 40px "Liberation Sans", "Noto Sans CJK SC", sans-serif; color: rgba(255, 255, 255, .55); letter-spacing: 1px; white-space: nowrap; line-height: 40px; }
.wm-url { position: absolute; left: 79px; top: 56px; font: bold 16px "Liberation Sans", sans-serif; color: rgba(170, 170, 170, .75); letter-spacing: 2.900px; white-space: nowrap; }
```
